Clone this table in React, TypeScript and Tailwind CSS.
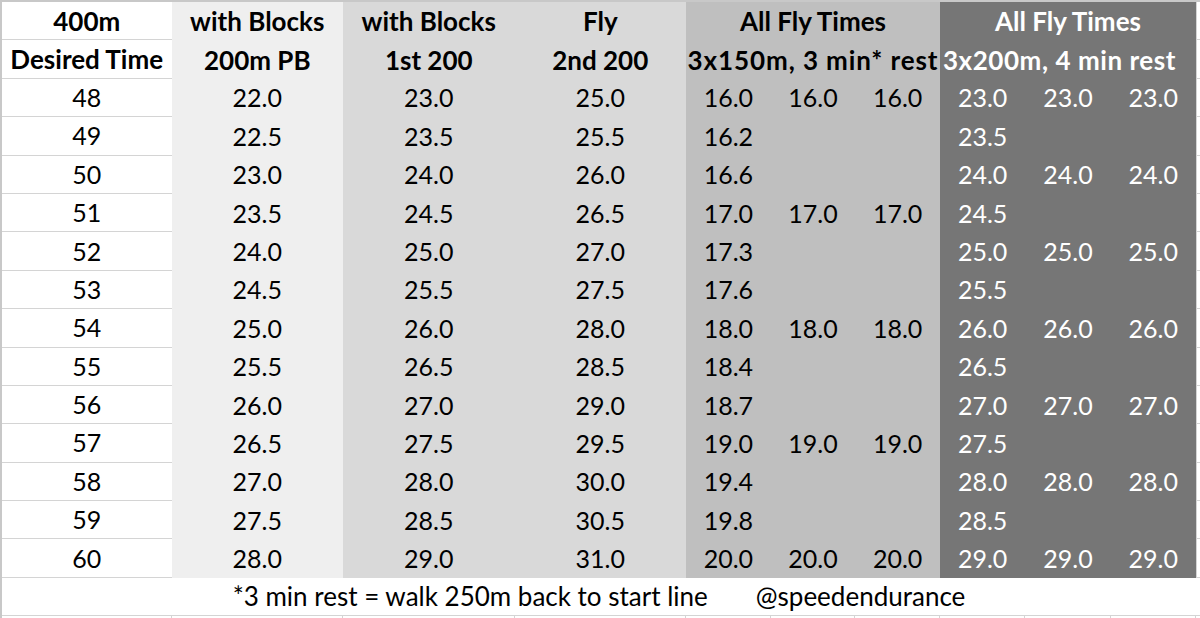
import React from "react";

const rows: [string, string, string, string, string[], string[]][] = [
  ["48", "22.0", "23.0", "25.0", ["16.0", "16.0", "16.0"], ["23.0", "23.0", "23.0"]],
  ["49", "22.5", "23.5", "25.5", ["16.2", "", ""], ["23.5", "", ""]],
  ["50", "23.0", "24.0", "26.0", ["16.6", "", ""], ["24.0", "24.0", "24.0"]],
  ["51", "23.5", "24.5", "26.5", ["17.0", "17.0", "17.0"], ["24.5", "", ""]],
  ["52", "24.0", "25.0", "27.0", ["17.3", "", ""], ["25.0", "25.0", "25.0"]],
  ["53", "24.5", "25.5", "27.5", ["17.6", "", ""], ["25.5", "", ""]],
  ["54", "25.0", "26.0", "28.0", ["18.0", "18.0", "18.0"], ["26.0", "26.0", "26.0"]],
  ["55", "25.5", "26.5", "28.5", ["18.4", "", ""], ["26.5", "", ""]],
  ["56", "26.0", "27.0", "29.0", ["18.7", "", ""], ["27.0", "27.0", "27.0"]],
  ["57", "26.5", "27.5", "29.5", ["19.0", "19.0", "19.0"], ["27.5", "", ""]],
  ["58", "27.0", "28.0", "30.0", ["19.4", "", ""], ["28.0", "28.0", "28.0"]],
  ["59", "27.5", "28.5", "30.5", ["19.8", "", ""], ["28.5", "", ""]],
  ["60", "28.0", "29.0", "31.0", ["20.0", "20.0", "20.0"], ["29.0", "29.0", "29.0"]],
];

const cellA = "h-[38.4px] flex items-center justify-center bg-white border-b border-[#d4d4d4]";
const cellB = "h-[38.4px] flex items-center justify-center bg-[#efefef]";
const cellC = "h-[38.4px] flex items-center justify-center bg-[#d9d9d9]";
const cellE = "h-[38.4px] flex items-center justify-center bg-[#bfbfbf]";
const cellH = "h-[38.4px] flex items-center justify-center bg-[#767676] text-white";
const hd = " font-bold text-[26px] whitespace-nowrap";

export default function App() {
  return (
    <div
      className="w-[1200px] h-[618px] overflow-hidden bg-white text-black text-[25px] leading-none border-t-2 border-l-2 border-[#c8c8c8]"
      style={{ fontFamily: "Lato, 'Open Sans', sans-serif" }}
    >
      <div className="flex">
        <div className="grid grid-cols-[169.5px_171.5px_171.5px_171.5px_84.67px_84.67px_84.66px_85.33px_85.33px_85.34px]">
          {/* header row 1 */}
          <div className={cellA + hd}>400m</div>
          <div className={cellB + hd}>with Blocks</div>
          <div className={cellC + hd}>with Blocks</div>
          <div className={cellC + hd}>Fly</div>
          <div className={cellE + hd + " col-span-3"}>All Fly Times</div>
          <div className={cellH + hd + " col-span-3"}>All Fly Times</div>
          {/* header row 2 */}
          <div className={cellA + hd}>Desired Time</div>
          <div className={cellB + hd}>200m PB</div>
          <div className={cellC + hd}>1st 200</div>
          <div className={cellC + hd}>2nd 200</div>
          <div className={cellE + hd + " col-span-3 tracking-[0.9px]"}>3x150m, 3 min* rest</div>
          <div className={"h-[38.4px] flex items-center justify-start pl-[3px] bg-[#767676] text-white" + hd + " col-span-3 tracking-[0.55px]"}>3x200m, 4 min rest</div>
          {rows.map((r) => (
            <React.Fragment key={r[0]}>
              <div className={cellA}>{r[0]}</div>
              <div className={cellB}>{r[1]}</div>
              <div className={cellC}>{r[2]}</div>
              <div className={cellC}>{r[3]}</div>
              {r[4].map((v, i) => (
                <div key={"e" + i} className={cellE}>{v}</div>
              ))}
              {r[5].map((v, i) => (
                <div key={"h" + i} className={cellH}>{v}</div>
              ))}
            </React.Fragment>
          ))}
        </div>
        <div className="flex-1 border-l border-[#d4d4d4]">
          {Array.from({ length: 15 }).map((_, i) => (
            <div key={i} className="h-[38.4px] border-b border-[#d4d4d4]" />
          ))}
        </div>
      </div>
      <div className="h-[38px] flex items-center justify-center gap-[48px] border-b border-[#d4d4d4] pr-[4px] text-[26px]">
        <span>*3 min rest = walk 250m back to start line</span>
        <span>@speedendurance</span>
      </div>
      <div className="flex h-[10px]">
        <div className="w-[169.5px] border-r border-[#d4d4d4]" />
        <div className="w-[171.5px] border-r border-[#d4d4d4]" />
        <div className="w-[171.5px] border-r border-[#d4d4d4]" />
        <div className="w-[171.5px] border-r border-[#d4d4d4]" />
        <div className="w-[84.67px] border-r border-[#d4d4d4]" />
        <div className="w-[84.67px] border-r border-[#d4d4d4]" />
        <div className="w-[84.66px] border-r border-[#d4d4d4]" />
        <div className="w-[85.33px] border-r border-[#d4d4d4]" />
        <div className="w-[85.33px] border-r border-[#d4d4d4]" />
        <div className="w-[85.34px] border-r border-[#d4d4d4]" />
      </div>
    </div>
  );
}
